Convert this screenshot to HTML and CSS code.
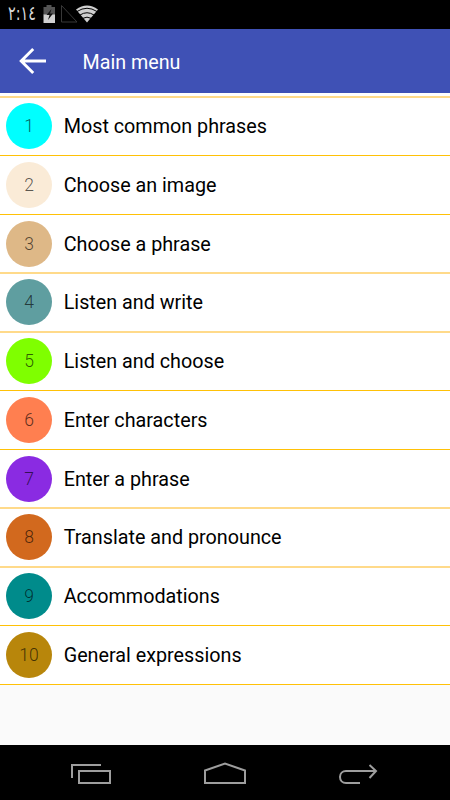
FILE: index.html
```html
<!DOCTYPE html>
<html lang="en">
<head>
<meta charset="utf-8">
<title>Main menu</title>
<link rel="stylesheet" href="styles.css">
</head>
<body>
<div class="status">
  <span class="clock">٢:١٤</span>
  <svg class="status-icons" width="60" height="28" viewBox="40 0 60 28">
    <path d="M46.500 5h5v2h3.500v8H43.500V7h3z" fill="#555"/>
    <path d="M43.500 14.500h11.500v8.500H43.500z" fill="#d0d0d0"/>
    <path d="M51.5 9l-5 6h3l-1.500 5 5-6.500h-3z" fill="#111"/>
    <path d="M61.500 5.500v16.500h15.500z" fill="none" stroke="#383838"/>
    <path d="M76 9.500Q87 1.500 98 9.500L87 22.500z" fill="#d0d0d0"/>
    <path d="M77 11.500Q87 5 97 11.500M80 15Q87 10.500 94 15M83 18.300Q87 16 91 18.300" fill="none" stroke="#000" stroke-width="1"/>
  </svg>
</div>
<header class="toolbar">
  <svg class="back" width="28" height="28" viewBox="0 0 28 28"><path d="M27 14H3M14.200 2L2.200 14l12 12" fill="none" stroke="#fff" stroke-width="2.900"/></svg>
  <h1>Main menu</h1>
</header>
<main>
  <ul class="menu">
    <li class="soft"><span class="num aqua">1</span><span class="label">Most common phrases</span></li>
    <li><span class="num linen">2</span><span class="label">Choose an image</span></li>
    <li class="short"><span class="num wood">3</span><span class="label">Choose a phrase</span></li>
    <li class="soft"><span class="num cadet">4</span><span class="label">Listen and write</span></li>
    <li class="soft"><span class="num lime">5</span><span class="label">Listen and choose</span></li>
    <li><span class="num coral">6</span><span class="label">Enter characters</span></li>
    <li class="short"><span class="num violet">7</span><span class="label">Enter a phrase</span></li>
    <li class="soft"><span class="num chocolate">8</span><span class="label">Translate and pronounce</span></li>
    <li class="soft"><span class="num teal">9</span><span class="label">Accommodations</span></li>
    <li><span class="num gold">10</span><span class="label">General expressions</span></li>
  </ul>
</main>
<nav class="navbar">
  <svg width="42" height="24" viewBox="70 762 42 24"><path d="M72 778v-13H101M79 771h31v12H79z"/></svg>
  <svg width="44" height="24" viewBox="203 762 44 24"><path d="M205 783v-12.500l20-7 20 7V783z"/></svg>
  <svg width="42" height="24" viewBox="338 762 42 24"><path d="M360 783h-14c-3.500 0-6-2.500-6-6s2.500-6 6-6h30M369.500 765l6.500 6-6.500 7"/></svg>
</nav>
</body>
</html>
```

FILE: styles.css
```css
* { box-sizing: border-box; }
body {
  margin: 0;
  width: 450px;
  height: 800px;
  display: flex;
  flex-direction: column;
  overflow: hidden;
  background: #fafafa;
  font-family: Roboto, sans-serif;
}
.status {
  height: 29px;
  flex: none;
  display: flex;
  background: #000;
}
.clock {
  width: 40px;
  padding-left: 8px;
  color: #d8d8d8;
  font: 20px/27px "DejaVu Sans", sans-serif;
  direction: ltr;
  unicode-bidi: bidi-override;
  white-space: nowrap;
  transform: scaleX(0.72);
  transform-origin: 8px 50%;
}
.toolbar {
  height: 64px;
  flex: none;
  display: flex;
  align-items: center;
  gap: 36px;
  padding-left: 18.500px;
  background: #3f51b5;
}
h1 {
  margin: 0;
  padding-top: 2px;
  color: #fff;
  font-size: 19.700px;
  font-weight: 400;
}
main { flex: 1; }
.menu {
  margin: 0;
  padding: 3px 0 0;
  list-style: none;
  background: #fff;
}
.menu li {
  height: 59px;
  display: flex;
  align-items: flex-start;
  gap: 11.700px;
  padding: 6px 6px 0;
  border-top: 1px solid #ffc107;
}
.menu li.short { height: 58px; }
.menu li.soft {
  padding-top: 5px;
  border-top: 2px solid #ffda8a;
}
.menu li:last-child { height: 60px; border-bottom: 1px solid #ffc107; }
.num {
  width: 46px;
  height: 46px;
  flex: none;
  border-radius: 50%;
  text-align: center;
  font-size: 17.500px;
  font-weight: 350;
  line-height: 47px;
  color: rgba(0, 0, 0, 0.65);
}
.label {
  font-size: 19.750px;
  line-height: 48px;
  color: #000;
}
.aqua { background: #00ffff; }
.linen { background: #faebd7; }
.wood { background: #deb887; }
.cadet { background: #5f9ea0; }
.lime { background: #7fff00; }
.coral { background: #ff7f50; }
.violet { background: #8a2be2; }
.chocolate { background: #d2691e; }
.teal { background: #008b8b; }
.gold { background: #b8860b; }
.navbar {
  height: 55px;
  flex: none;
  display: flex;
  justify-content: space-between;
  padding: 17px 70px 0;
  background: #000;
}
.navbar path {
  fill: none;
  stroke: #9e9e9e;
  stroke-width: 2;
}
```
